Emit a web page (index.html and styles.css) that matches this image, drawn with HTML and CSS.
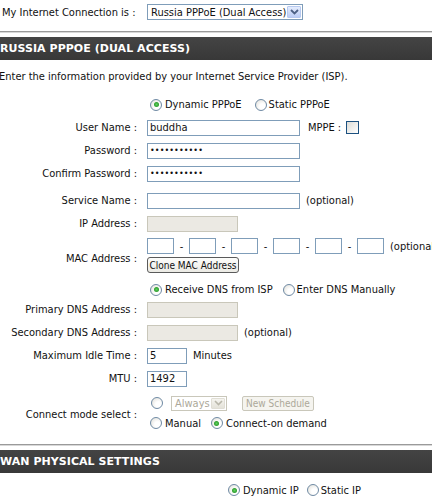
FILE: index.html
```html
<!DOCTYPE html>
<html>
<head>
<meta charset="utf-8">
<link rel="stylesheet" href="styles.css">
</head>
<body>
<div class="top">
  <span class="toplab">My Internet Connection is :</span>
  <span class="sel main">Russia PPPoE (Dual Access)<span class="arr"><svg width="9" height="6" viewBox="0 0 9 6"><path d="M1 1 L4.5 4.5 L8 1" fill="none" stroke="#4d6185" stroke-width="1.8"/></svg></span></span>
</div>
<div class="rule"></div>
<div class="bar">RUSSIA PPPOE (DUAL ACCESS)</div>
<p class="intro">Enter the information provided by your Internet Service Provider (ISP).</p>
<div class="form">
  <div class="row">
    <span class="lab"></span>
    <span class="fld"><span class="radio on"></span>Dynamic PPPoE<span class="radio sp"></span>Static PPPoE</span>
  </div>
  <div class="row">
    <span class="lab">User Name :</span>
    <span class="fld"><span class="inp w153">buddha</span><span class="mppe">MPPE :</span><span class="chk"></span></span>
  </div>
  <div class="row">
    <span class="lab">Password :</span>
    <span class="fld"><span class="inp w153 dots">•••••••••••</span></span>
  </div>
  <div class="row">
    <span class="lab">Confirm Password :</span>
    <span class="fld"><span class="inp w153 dots">•••••••••••</span></span>
  </div>
  <div class="row svc">
    <span class="lab">Service Name :</span>
    <span class="fld"><span class="inp w153"></span><span class="note">(optional)</span></span>
  </div>
  <div class="row">
    <span class="lab">IP Address :</span>
    <span class="fld"><span class="inp w91 dis"></span></span>
  </div>
  <div class="row mac">
    <span class="lab">MAC Address :</span>
    <span class="fld col">
      <span class="macline"><span class="inp mb"></span><span class="dash">-</span><span class="inp mb"></span><span class="dash">-</span><span class="inp mb"></span><span class="dash">-</span><span class="inp mb"></span><span class="dash">-</span><span class="inp mb"></span><span class="dash">-</span><span class="inp mb"></span><span class="note">(optional)</span></span>
      <span class="btn">Clone MAC Address</span>
    </span>
  </div>
  <div class="row dns">
    <span class="lab"></span>
    <span class="fld"><span class="radio on"></span>Receive DNS from ISP<span class="radio sp2"></span>Enter DNS Manually</span>
  </div>
  <div class="row">
    <span class="lab">Primary DNS Address :</span>
    <span class="fld"><span class="inp w91 dis"></span></span>
  </div>
  <div class="row">
    <span class="lab">Secondary DNS Address :</span>
    <span class="fld"><span class="inp w91 dis"></span><span class="note n2">(optional)</span></span>
  </div>
  <div class="row">
    <span class="lab">Maximum Idle Time :</span>
    <span class="fld"><span class="inp w40">5</span><span class="note n2">Minutes</span></span>
  </div>
  <div class="row">
    <span class="lab">MTU :</span>
    <span class="fld"><span class="inp w40">1492</span></span>
  </div>
  <div class="row conn">
    <span class="lab">Connect mode select :</span>
    <span class="fld col">
      <span class="cline"><span class="radio r1"></span><span class="sel dsel">Always<span class="arr darr"><svg width="9" height="6" viewBox="0 0 9 6"><path d="M1 1 L4.5 4.5 L8 1" fill="none" stroke="#b9b7aa" stroke-width="1.6"/></svg></span></span><span class="btn dbtn">New Schedule</span></span>
      <span class="cline c2"><span class="radio"></span>Manual<span class="radio sp3 on"></span>Connect-on demand</span>
    </span>
  </div>
</div>
<div class="rule r2"></div>
<div class="bar">WAN PHYSICAL SETTINGS</div>
<div class="wan"><span class="radio on"></span>Dynamic IP<span class="radio sp4"></span>Static IP</div>
</body>
</html>
```
FILE: styles.css
```css
html, body {
  margin: 0;
  padding: 0;
  background: #fff;
  overflow: hidden;
}
body {
  font-family: "DejaVu Sans Condensed", "DejaVu Sans", sans-serif;
  font-stretch: condensed;
  font-size: 11px;
  color: #111;
  width: 432px;
}
.top {
  display: flex;
  align-items: center;
  height: 16px;
  padding-top: 4px;
  padding-left: 2px;
}
.toplab {
  width: 145px;
  flex: none;
}
.sel {
  box-sizing: border-box;
  display: flex;
  align-items: center;
  height: 16px;
  border: 1px solid #7f9db9;
  padding-left: 3px;
  background: #fff;
  position: relative;
}
.main {
  width: 156px;
}
.arr {
  position: absolute;
  right: 1px;
  top: 1px;
  width: 14px;
  height: 12px;
  box-sizing: border-box;
  border: 1px solid #b7c9f0;
  border-radius: 1px;
  background: linear-gradient(#e4ecfd, #bccdf5);
  display: flex;
  align-items: center;
  justify-content: center;
}
.rule {
  margin-top: 11px;
  height: 1px;
  border-top: 1px solid #9a9a9a;
  background: #d8d8d8;
}
.bar {
  margin-top: 4px;
  height: 23px;
  background: linear-gradient(#444, #383838);
  color: #fff;
  font-family: "DejaVu Sans", sans-serif;
  font-stretch: normal;
  font-weight: bold;
  font-size: 11px;
  display: flex;
  align-items: center;
  padding-left: 0;
  letter-spacing: 0.05px;
}
.intro {
  margin: 10px 0 0 -1px;
  line-height: 14px;
}
.form {
  margin-top: 9px;
  display: flex;
  flex-direction: column;
}
.row {
  display: flex;
  align-items: center;
  height: 23px;
}
.lab {
  flex: none;
  width: 137px;
  margin-right: 10px;
  text-align: right;
  white-space: nowrap;
}
.fld {
  display: flex;
  align-items: center;
  white-space: nowrap;
}
.col {
  flex-direction: column;
  align-items: flex-start;
}
.inp {
  box-sizing: border-box;
  display: flex;
  align-items: center;
  height: 16px;
  border: 1px solid #7f9db9;
  background: #fff;
  padding-left: 2px;
  flex: none;
}
.w153 { width: 153px; }
.w91 { width: 91px; }
.w40 { width: 40px; }
.dis {
  background: #ebe9e3;
  border-color: #c9c7ba;
}
.dots {
  font-size: 8px;
  letter-spacing: 0.1px;
  font-family: "DejaVu Sans", sans-serif;
  font-stretch: normal;
}
.mppe {
  margin-left: 8px;
}
.chk {
  box-sizing: border-box;
  width: 13px;
  height: 13px;
  border: 1px solid #1c5180;
  background: linear-gradient(135deg, #dcdcd7, #fff);
  margin-left: 5px;
}
.note {
  margin-left: 6px;
}
.n2 { margin-left: 6px; }
.svc { margin-top: 4px; }
.mac { height: auto; padding-top: 0; }
.mac .lab { padding-top: 8px; }
.macline {
  display: flex;
  align-items: center;
  height: 22px;
}
.mb { width: 27px; }
.dash {
  width: 15px;
  text-align: center;
  flex: none;
}
.btn {
  box-sizing: border-box;
  display: flex;
  align-items: center;
  justify-content: center;
  height: 16px;
  width: 92px;
  border: 1px solid #5a5a5a;
  border-radius: 3px;
  background: linear-gradient(#fdfdfb, #ebeae4);
  font-size: 10px;
  white-space: nowrap;
}
.dns {
  margin-top: 8px;
  height: 17px;
}
.radio {
  box-sizing: border-box;
  width: 12px;
  height: 12px;
  border-radius: 50%;
  border: 1px solid #6f8aa4;
  background: radial-gradient(circle at 65% 65%, #fff 30%, #dedcd5 100%);
  margin: 0 3px 0 3px;
  flex: none;
  position: relative;
}
.radio.on::after {
  content: "";
  position: absolute;
  left: 2.5px;
  top: 2.5px;
  width: 5px;
  height: 5px;
  border-radius: 50%;
  background: radial-gradient(circle, #5fd05f 0%, #2a9a2a 70%, #8fd08f 100%);
}
.sp { margin-left: 13px; margin-right: 2px; }
.sp2 { margin-left: 10px; margin-right: 2px; }
.sp3 { margin-left: 10px; margin-right: 3px; }
.conn {
  height: auto;
  margin-top: 5px;
}
.conn .lab { padding-top: 2px; }
.cline {
  display: flex;
  align-items: center;
  height: 16px;
}
.c2 { margin-top: 4px; }
.r1 { margin-left: 4px; margin-right: 8px; }
.dsel {
  width: 56px;
  height: 15px;
  color: #aca899;
  border-color: #c9c7ba;
}
.darr {
  height: 11px;
  border-color: #e0ded5;
  background: linear-gradient(#f5f4ef, #e4e2d9);
}
.dbtn {
  width: 72px;
  height: 15px;
  margin-left: 15px;
  color: #aca899;
  border-color: #c9c7ba;
  border-radius: 2px;
  background: #f5f4ef;
}
.r2 { margin-top: 13px; }
.wan {
  display: flex;
  align-items: center;
  height: 14px;
  margin-top: 10px;
  padding-left: 225px;
}
.sp4 { margin-left: 8px; margin-right: 2px; }
```
